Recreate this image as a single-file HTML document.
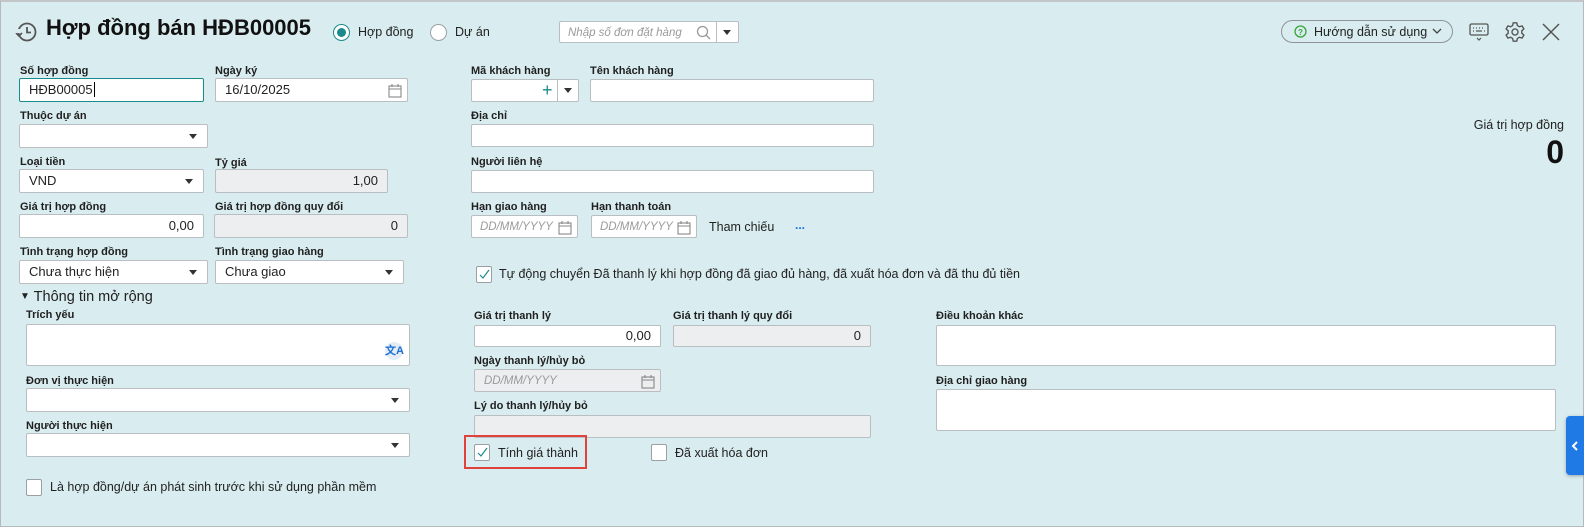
<!DOCTYPE html>
<html><head><meta charset="utf-8"><style>
*{box-sizing:border-box;margin:0;padding:0}
body{width:1584px;height:527px;overflow:hidden;background:#d9ecef;font-family:"Liberation Sans",Arial,sans-serif;color:#212121;position:relative}
.frame{position:absolute;left:0;top:0;width:1584px;height:527px;border:1px solid #b5b9bc;border-top:2px solid #c3c6c8}
.a{position:absolute}
.lb{position:absolute;font-size:11px;font-weight:bold;color:#1f1f1f;white-space:nowrap}
.in{position:absolute;background:#fff;border:1px solid #b9bec2;border-radius:2px;font-size:13px;line-height:20px;padding:0 9px;white-space:nowrap;color:#222}
.gr{background:#eceeef}
.r{text-align:right}
.dd::after{content:"";position:absolute;right:10px;top:9px;border-left:4px solid transparent;border-right:4px solid transparent;border-top:5px solid #333}
.ph{color:#9a9a9a;font-style:italic;font-size:11.5px}
.cb{position:absolute;width:16px;height:17px;background:#fff;border:1px solid #9aa0a4;border-radius:2px}
.tx{position:absolute;font-size:12.5px;white-space:nowrap;color:#222}
.cal{position:absolute;right:5px;top:4px}
</style></head><body>
<div class="frame"></div>
<svg class="a" style="left:14px;top:21px" width="24" height="22" viewBox="0 0 24 22"><circle cx="13" cy="11" r="8.5" fill="none" stroke="#555" stroke-width="1.8"/><path d="M13 6v5.5h4" fill="none" stroke="#555" stroke-width="1.8"/><path d="M2 12l3 3 3-3" fill="none" stroke="#555" stroke-width="1.6"/><rect x="1" y="8" width="6" height="4" fill="#d9ecef"/></svg>
<div class="a" style="left:46px;top:15px;font-size:22px;font-weight:bold;color:#111;white-space:nowrap">Hợp đồng bán HĐB00005</div>
<div class="a" style="left:333px;top:24px;width:17px;height:17px;border-radius:50%;border:1px solid #1b8a8c;background:#fff"><div style="position:absolute;left:3px;top:3px;width:9px;height:9px;border-radius:50%;background:#1b8a8c"></div></div>
<div class="tx" style="left:358px;top:25px">Hợp đồng</div>
<div class="a" style="left:430px;top:24px;width:17px;height:17px;border-radius:50%;border:1px solid #9aa0a4;background:#fff"></div>
<div class="tx" style="left:455px;top:25px">Dự án</div>
<div class="in" style="left:559px;top:21px;width:180px;height:22px;padding:0 8px"><span class="ph" style="line-height:20px">Nhập số đơn đặt hàng</span>
<svg class="a" style="left:136px;top:3px" width="16" height="16"><circle cx="6.5" cy="6.5" r="5" fill="none" stroke="#999" stroke-width="1.3"/><path d="M10 10l4 4" stroke="#999" stroke-width="1.3"/></svg>
<div class="a" style="left:156px;top:0;width:1px;height:20px;background:#b9bec2"></div>
<div class="a" style="left:163px;top:8px;border-left:4px solid transparent;border-right:4px solid transparent;border-top:5px solid #333"></div></div>
<div class="a" style="left:1281px;top:20px;width:172px;height:23px;border:1px solid #8e9396;border-radius:12px"></div>
<svg class="a" style="left:1294px;top:25px" width="13" height="13"><circle cx="6.5" cy="6.5" r="5.5" fill="none" stroke="#3aa53a" stroke-width="1.3"/><text x="6.5" y="10" font-size="8" font-family="Liberation Sans" font-weight="bold" fill="#3aa53a" text-anchor="middle">?</text></svg>
<div class="tx" style="left:1314px;top:25px;font-size:12.5px">Hướng dẫn sử dụng</div>
<svg class="a" style="left:1432px;top:27px" width="10" height="8"><path d="M1 2l4 4 4-4" fill="none" stroke="#444" stroke-width="1.3"/></svg>
<svg class="a" style="left:1469px;top:22px" width="20" height="20"><rect x="1" y="2" width="18" height="11" rx="1.5" fill="none" stroke="#555" stroke-width="1.3"/><path d="M4 6h1M7 6h1M10 6h1M13 6h1M16 6h0M4 9h1M7 9h6M15 9h1" stroke="#555" stroke-width="1.3"/><path d="M8 16l2 2 2-2" fill="none" stroke="#555" stroke-width="1.2"/></svg>
<svg class="a" style="left:1504px;top:21px" width="22" height="22" viewBox="0 0 24 24"><path d="M10 2h4l.6 3 2.2 1.3 2.9-1 2 3.4-2.3 2v2.6l2.3 2-2 3.4-2.9-1-2.2 1.3-.6 3h-4l-.6-3-2.2-1.3-2.9 1-2-3.4 2.3-2V10.7l-2.3-2 2-3.4 2.9 1L9.4 5z" fill="none" stroke="#555" stroke-width="1.5" stroke-linejoin="round"/><circle cx="12" cy="12" r="3.3" fill="none" stroke="#555" stroke-width="1.5"/></svg>
<svg class="a" style="left:1542px;top:23px" width="18" height="18"><path d="M1 1l16 16M17 1L1 17" stroke="#555" stroke-width="1.5"/></svg>
<div class="a" style="right:20px;top:118px;font-size:12.5px;white-space:nowrap">Giá trị hợp đồng</div>
<div class="a" style="right:20px;top:134px;font-size:32px;font-weight:bold;color:#111">0</div>

<div class="lb" style="left:20px;top:65px">Số hợp đồng</div>
<div class="in" style="left:19px;top:78px;width:185px;height:24px;border:1px solid #1b8a8c;line-height:22px">HĐB00005<span style="border-left:1px solid #000;margin-left:1px"></span></div>
<div class="lb" style="left:215px;top:65px">Ngày ký</div>
<div class="in" style="left:215px;top:78px;width:193px;height:24px;line-height:22px">16/10/2025<svg class="cal" width="14" height="15"><rect x="1" y="3" width="12" height="11" fill="none" stroke="#888" stroke-width="1.1"/><path d="M1 6h12M4 1v3M10 1v3" stroke="#888" stroke-width="1.1"/></svg></div>
<div class="lb" style="left:20px;top:110px">Thuộc dự án</div>
<div class="in dd" style="left:19px;top:124px;width:189px;height:24px"></div>
<div class="lb" style="left:20px;top:156px">Loại tiền</div>
<div class="in dd" style="left:19px;top:169px;width:185px;height:24px;line-height:22px">VND</div>
<div class="lb" style="left:215px;top:157px">Tỷ giá</div>
<div class="in gr r" style="left:215px;top:169px;width:173px;height:24px;line-height:22px">1,00</div>
<div class="lb" style="left:20px;top:201px">Giá trị hợp đồng</div>
<div class="in r" style="left:19px;top:214px;width:185px;height:24px;line-height:22px">0,00</div>
<div class="lb" style="left:215px;top:201px">Giá trị hợp đồng quy đổi</div>
<div class="in gr r" style="left:214px;top:214px;width:194px;height:24px;line-height:22px">0</div>
<div class="lb" style="left:20px;top:246px">Tình trạng hợp đồng</div>
<div class="in dd" style="left:19px;top:260px;width:189px;height:24px;line-height:22px">Chưa thực hiện</div>
<div class="lb" style="left:215px;top:246px">Tình trạng giao hàng</div>
<div class="in dd" style="left:215px;top:260px;width:189px;height:24px;line-height:22px">Chưa giao</div>
<div class="a" style="left:20px;top:289px;font-size:14.5px;white-space:nowrap"><span style="font-size:10px;position:relative;top:-2px">▼</span> Thông tin mở rộng</div>
<div class="lb" style="left:26px;top:309px">Trích yếu</div>
<div class="in" style="left:26px;top:324px;width:384px;height:42px"><div class="a" style="right:6px;bottom:5px;width:18px;height:18px;border-radius:50%;background:#e4edf5;font-size:11px;color:#1a6fd6;font-weight:bold;text-align:center;line-height:18px">文A</div></div>
<div class="lb" style="left:26px;top:375px">Đơn vị thực hiện</div>
<div class="in dd" style="left:26px;top:388px;width:384px;height:24px"></div>
<div class="lb" style="left:26px;top:420px">Người thực hiện</div>
<div class="in dd" style="left:26px;top:433px;width:384px;height:24px"></div>
<div class="cb" style="left:26px;top:479px"></div>
<div class="tx" style="left:50px;top:480px">Là hợp đồng/dự án phát sinh trước khi sử dụng phần mềm</div>

<div class="lb" style="left:471px;top:65px">Mã khách hàng</div>
<div class="in" style="left:471px;top:79px;width:108px;height:23px"><div class="a" style="left:70px;top:0;font-size:18px;color:#1b8a8c;line-height:20px">+</div><div class="a" style="left:85px;top:0;width:1px;height:21px;background:#b9bec2"></div><div class="a" style="left:92px;top:8px;border-left:4px solid transparent;border-right:4px solid transparent;border-top:5px solid #333"></div></div>
<div class="lb" style="left:590px;top:65px">Tên khách hàng</div>
<div class="in" style="left:590px;top:79px;width:284px;height:23px"></div>
<div class="lb" style="left:471px;top:110px">Địa chỉ</div>
<div class="in" style="left:471px;top:124px;width:403px;height:23px"></div>
<div class="lb" style="left:471px;top:156px">Người liên hệ</div>
<div class="in" style="left:471px;top:170px;width:403px;height:23px"></div>
<div class="lb" style="left:471px;top:201px">Hạn giao hàng</div>
<div class="in" style="left:471px;top:215px;width:107px;height:23px;padding:0 6px 0 8px"><span class="ph">DD/MM/YYYY</span><svg class="cal" width="14" height="15"><rect x="1" y="3" width="12" height="11" fill="none" stroke="#888" stroke-width="1.1"/><path d="M1 6h12M4 1v3M10 1v3" stroke="#888" stroke-width="1.1"/></svg></div>
<div class="lb" style="left:591px;top:201px">Hạn thanh toán</div>
<div class="in" style="left:591px;top:215px;width:106px;height:23px;padding:0 6px 0 8px"><span class="ph">DD/MM/YYYY</span><svg class="cal" width="14" height="15"><rect x="1" y="3" width="12" height="11" fill="none" stroke="#888" stroke-width="1.1"/><path d="M1 6h12M4 1v3M10 1v3" stroke="#888" stroke-width="1.1"/></svg></div>
<div class="tx" style="left:709px;top:220px">Tham chiếu</div>
<div class="a" style="left:795px;top:218px;font-size:12px;color:#1a6fd6;font-weight:bold">...</div>
<div class="cb" style="left:476px;top:266px"><svg class="a" style="left:2px;top:2px" width="11" height="11"><path d="M1 6l3 3 6-8" fill="none" stroke="#1b8a8c" stroke-width="1.2"/></svg></div>
<div class="tx" style="left:499px;top:267px">Tự động chuyển Đã thanh lý khi hợp đồng đã giao đủ hàng, đã xuất hóa đơn và đã thu đủ tiền</div>
<div class="lb" style="left:474px;top:310px">Giá trị thanh lý</div>
<div class="in r" style="left:474px;top:325px;width:187px;height:22px">0,00</div>
<div class="lb" style="left:673px;top:310px">Giá trị thanh lý quy đổi</div>
<div class="in gr r" style="left:673px;top:325px;width:198px;height:22px">0</div>
<div class="lb" style="left:474px;top:355px">Ngày thanh lý/hủy bỏ</div>
<div class="in gr" style="left:474px;top:369px;width:187px;height:23px"><span class="ph">DD/MM/YYYY</span><svg class="cal" width="14" height="15"><rect x="1" y="3" width="12" height="11" fill="none" stroke="#888" stroke-width="1.1"/><path d="M1 6h12M4 1v3M10 1v3" stroke="#888" stroke-width="1.1"/></svg></div>
<div class="lb" style="left:474px;top:400px">Lý do thanh lý/hủy bỏ</div>
<div class="in gr" style="left:474px;top:415px;width:397px;height:23px"></div>
<div class="a" style="left:464px;top:435px;width:123px;height:34px;border:2px solid #e0433c"></div>
<div class="cb" style="left:474px;top:444px"><svg class="a" style="left:2px;top:2px" width="11" height="11"><path d="M1 6l3 3 6-8" fill="none" stroke="#1b8a8c" stroke-width="1.2"/></svg></div>
<div class="tx" style="left:498px;top:446px">Tính giá thành</div>
<div class="cb" style="left:651px;top:444px"></div>
<div class="tx" style="left:675px;top:446px">Đã xuất hóa đơn</div>

<div class="lb" style="left:936px;top:310px">Điều khoản khác</div>
<div class="in" style="left:936px;top:325px;width:620px;height:41px"></div>
<div class="lb" style="left:936px;top:375px">Địa chỉ giao hàng</div>
<div class="in" style="left:936px;top:389px;width:620px;height:42px"></div>
<div class="a" style="left:1566px;top:416px;width:18px;height:59px;background:#1f7ae6;border-radius:4px 0 0 4px;box-shadow:0 1px 3px rgba(0,0,0,.3)"><svg class="a" style="left:5px;top:25px" width="8" height="10"><path d="M6 1L2 5l4 4" fill="none" stroke="#fff" stroke-width="2"/></svg></div>
</body></html>
